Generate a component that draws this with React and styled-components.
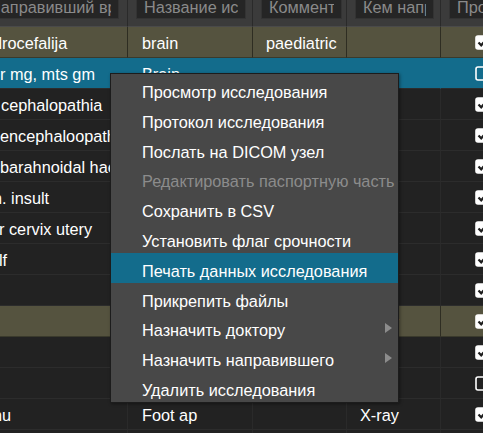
import React from "react";
import styled, { createGlobalStyle } from "styled-components";

const GlobalStyle = createGlobalStyle`
  html, body { margin: 0; padding: 0; background: #222222; overflow: hidden; }
  body { font-family: "Liberation Sans", Arial, sans-serif; font-size: 16.3px; color: #ffffff; }
`;

const Viewport = styled.div`
  position: relative;
  width: 483px;
  height: 433px;
  overflow: hidden;
  background: #222222;
`;

const Table = styled.div`
  display: grid;
  grid-template-columns: 155px 125px 94px 94px 80px;
  margin-left: -27px;
  width: max-content;
`;

const HeaderRow = styled.div`
  display: contents;
`;

const HeaderCell = styled.div`
  height: 27px;
  box-sizing: border-box;
  background: #3b3b3b;
  border-right: 1px solid #2a2a2a;
  border-bottom: 1px solid #4a4a4a;
  padding: 0 ${(p) => p.$right ?? 6}px 0 8px;
  overflow: hidden;
`;

const FilterInput = styled.input`
  display: block;
  box-sizing: border-box;
  width: 100%;
  height: 24px;
  margin-top: -5px;
  padding: 0 7px;
  background: #252525;
  border: 1px solid #333333;
  color: #8c8c8c;
  font: 16.3px "Liberation Sans", Arial, sans-serif;
  outline: none;
  &::placeholder { color: #8a8a8a; opacity: 1; }
`;

const Row = styled.div`
  display: contents;
`;

const bgFor = (v) =>
  v === "olive" ? "#55533f" : v === "selected" ? "#136c8c" : "#222222";

const Cell = styled.div`
  height: 31px;
  box-sizing: border-box;
  padding-top: 3px;
  padding-left: ${(p) => p.$pad ?? 14}px;
  line-height: 27px;
  white-space: nowrap;
  overflow: hidden;
  background: ${(p) => bgFor(p.$variant)};
  border-bottom: 1px solid ${(p) => (p.$variant === "olive" ? "#3a3a2c" : "#2c2c2c")};
  border-right: 1px solid ${(p) => (p.$variant === "olive" ? "#2e2d22" : p.$variant === "selected" ? "#136c8c" : "#2a2a2a")};
  color: #ffffff;
`;

const CheckCell = styled(Cell)`
  padding-left: 34px;
  padding-top: 8px;
  line-height: 0;
`;

const Menu = styled.div`
  position: absolute;
  left: 110px;
  top: 73px;
  width: 289px;
  box-sizing: border-box;
  background: #484848;
  border: 1px solid #1c1c1c;
  box-shadow: 1px 1px 3px rgba(0, 0, 0, 0.4);
`;

const MenuItem = styled.div`
  position: relative;
  height: 29.8px;
  box-sizing: border-box;
  padding: 7px 0 0 31px;
  line-height: 22px;
  white-space: nowrap;
  color: ${(p) => (p.$disabled ? "#8c8c8c" : "#ffffff")};
  background: ${(p) => (p.$active ? "#136c8c" : "transparent")};
`;

const SubArrow = styled.span`
  position: absolute;
  right: 6px;
  top: 11px;
  width: 0;
  height: 0;
  border-top: 5px solid transparent;
  border-bottom: 5px solid transparent;
  border-left: 7px solid #8c8c8c;
`;

function Checkbox({ checked }) {
  return (
    <svg width="15" height="15" viewBox="0 0 15 15">
      <rect x="1" y="1" width="13" height="13" rx="2" fill={checked ? "#ffffff" : "none"} stroke="#ffffff" strokeWidth="1.6" />
      {checked && (
        <path d="M3.5 7.5 L6.2 10.3 L11.5 4.2" fill="none" stroke="#1e1e1e" strokeWidth="2.2" />
      )}
    </svg>
  );
}

const headers = [
  { ph: "Направивший врач", right: 8 },
  { ph: "Название исследования", right: 6 },
  { ph: "Комментарий", right: 4 },
  { ph: "Кем направлен", right: 6 },
  { ph: "Просмотрено", right: 6 },
];

const rows = [
  { v: "olive", c1: "drocefalija", p1: 20, c2: "brain", c3: "paediatric", c4: "", chk: true },
  { v: "selected", c1: "r mg, mts gm", p1: 27, c2: "Brain", c3: "", c4: "", chk: false },
  { v: "", c1: "cephalopathia", p1: 28, c2: "", c3: "", c4: "", chk: true },
  { v: "", c1: "encephaloopathia", p1: 27, c2: "", c3: "", c4: "", chk: true },
  { v: "", c1: "barahnoidal haemorrhage", p1: 27, c2: "", c3: "", c4: "", chk: true },
  { v: "", c1: "n. insult", p1: 20, c2: "", c3: "", c4: "", chk: true },
  { v: "", c1: "r cervix utery", p1: 26, c2: "", c3: "", c4: "", chk: true },
  { v: "", c1: "lf", p1: 26, c2: "", c3: "", c4: "", chk: true },
  { v: "", c1: "", p1: 27, c2: "", c3: "", c4: "", chk: true },
  { v: "olive", c1: "", p1: 27, c2: "", c3: "", c4: "X-ray", chk: true },
  { v: "", c1: "", p1: 27, c2: "", c3: "", c4: "", chk: true },
  { v: "", c1: "", p1: 27, c2: "", c3: "", c4: "", chk: false },
  { v: "", c1: "nu", p1: 20, c2: "Foot ap", c3: "", c4: "X-ray", chk: true },
  { v: "", c1: "", p1: 27, c2: "", c3: "", c4: "", chk: true },
];

const menuItems = [
  { t: "Просмотр исследования" },
  { t: "Протокол исследования" },
  { t: "Послать на DICOM узел" },
  { t: "Редактировать паспортную часть", disabled: true },
  { t: "Сохранить в CSV" },
  { t: "Установить флаг срочности" },
  { t: "Печать данных исследования", active: true },
  { t: "Прикрепить файлы" },
  { t: "Назначить доктору", sub: true },
  { t: "Назначить направившего", sub: true },
  { t: "Удалить исследования" },
];

export default function App() {
  return (
    <>
      <GlobalStyle />
      <Viewport>
        <Table>
          <HeaderRow>
            {headers.map((h, i) => (
              <HeaderCell key={i} $right={h.right}>
                <FilterInput placeholder={h.ph} readOnly />
              </HeaderCell>
            ))}
          </HeaderRow>
          {rows.map((r, i) => (
            <Row key={i}>
              <Cell $variant={r.v} $pad={r.p1}>{r.c1}</Cell>
              <Cell $variant={r.v}>{r.c2}</Cell>
              <Cell $variant={r.v} $pad={13}>{r.c3}</Cell>
              <Cell $variant={r.v} $pad={13}>{r.c4}</Cell>
              <CheckCell $variant={r.v}>
                <Checkbox checked={r.chk} />
              </CheckCell>
            </Row>
          ))}
        </Table>
        <Menu>
          {menuItems.map((m, i) => (
            <MenuItem key={i} $disabled={m.disabled} $active={m.active}>
              {m.t}
              {m.sub && <SubArrow />}
            </MenuItem>
          ))}
        </Menu>
      </Viewport>
    </>
  );
}
